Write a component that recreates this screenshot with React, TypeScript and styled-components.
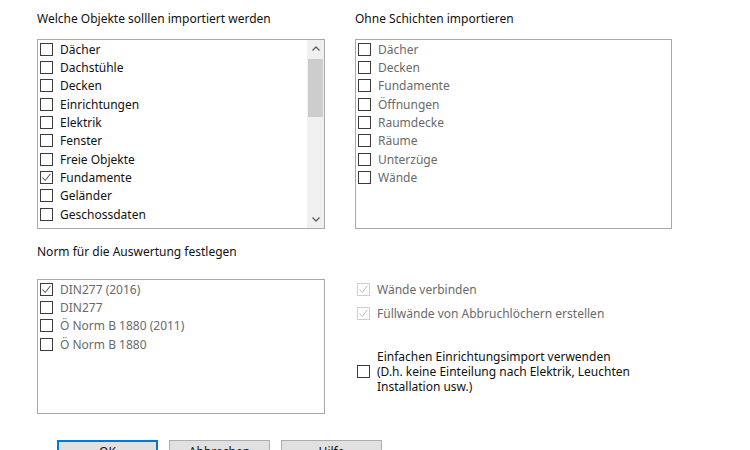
import React from 'react';
import styled, { createGlobalStyle } from 'styled-components';

const GlobalStyle = createGlobalStyle`
  html, body {
    margin: 0;
    padding: 0;
    background: #ffffff;
  }
`;

const Page = styled.div`
  width: 750px;
  height: 450px;
  overflow: hidden;
  box-sizing: border-box;
  padding: 11px 0 0 37px;
  font-family: 'Noto Sans', 'Open Sans', sans-serif;
  font-size: 12px;
  color: #111111;
`;

const Grid = styled.div`
  display: grid;
  grid-template-columns: 288px 317px;
  column-gap: 30px;
`;

const Section = styled.div<{ $top?: number }>`
  display: flex;
  flex-direction: column;
  margin-top: ${(p) => p.$top ?? 0}px;
`;

const GroupLabel = styled.div<{ $gap: number }>`
  line-height: 16px;
  height: 16px;
  margin-bottom: ${(p) => p.$gap}px;
  white-space: nowrap;
`;

const ListBox = styled.div<{ $height: number }>`
  display: flex;
  height: ${(p) => p.$height}px;
  box-sizing: border-box;
  border: 1px solid #a9a9a9;
  background: #ffffff;
`;

const Items = styled.div`
  flex: 1;
  display: flex;
  flex-direction: column;
  padding: 0 0 0 2px;
  overflow: hidden;
`;

const Item = styled.div<{ $muted?: boolean }>`
  display: flex;
  align-items: center;
  gap: 7px;
  height: 18.35px;
  flex: none;
  white-space: nowrap;
  color: ${(p) => (p.$muted ? '#6a6a6a' : '#111111')};
`;

const Box = styled.span<{ $faint?: boolean }>`
  display: inline-flex;
  align-items: center;
  justify-content: center;
  width: 13px;
  height: 13px;
  flex: none;
  box-sizing: border-box;
  border: 1px solid ${(p) => (p.$faint ? '#cfcfcf' : '#3c3c3c')};
  background: #ffffff;
  color: ${(p) => (p.$faint ? '#bdbdbd' : '#3c3c3c')};
`;

const Scrollbar = styled.div`
  width: 17px;
  flex: none;
  display: flex;
  flex-direction: column;
  background: #f0f0f0;
`;

const Arrow = styled.div`
  height: 17px;
  display: flex;
  align-items: center;
  justify-content: center;
  color: #606060;
`;

const Track = styled.div`
  flex: 1;
  padding-top: 2px;
`;

const Thumb = styled.div`
  height: 58px;
  margin: 0 1px;
  background: #cdcdcd;
`;

const Options = styled.div`
  display: flex;
  flex-direction: column;
  padding-top: 51px;
`;

const Option = styled.div<{ $faint?: boolean; $top?: number }>`
  display: flex;
  align-items: center;
  gap: 7px;
  margin-top: ${(p) => p.$top ?? 0}px;
  padding-left: 2px;
  line-height: 15px;
  min-height: 18px;
  color: ${(p) => (p.$faint ? '#6a6a6a' : '#111111')};
`;

const Buttons = styled.div`
  display: flex;
  gap: 11px;
  margin-top: 26px;
  padding-left: 20px;
`;

const Button = styled.button<{ $primary?: boolean }>`
  width: 101px;
  height: 23px;
  box-sizing: border-box;
  font-family: inherit;
  font-size: 12px;
  line-height: 16px;
  color: #111111;
  background: #e1e1e1;
  border: ${(p) => (p.$primary ? '2px solid #0078d7' : '1px solid #adadad')};
  padding: 0;
`;

const Check = () => (
  <svg width="11" height="11" viewBox="0 0 11 11">
    <polyline points="1.5,5.5 4.2,8.5 9.5,1.8" fill="none" stroke="currentColor" strokeWidth="1" />
  </svg>
);

const Chevron = ({ up }: { up?: boolean }) => (
  <svg width="8" height="5" viewBox="0 0 8 5">
    <polyline
      points={up ? '0.5,4.5 4,1 7.5,4.5' : '0.5,0.5 4,4 7.5,0.5'}
      fill="none"
      stroke="currentColor"
      strokeWidth="1.3"
    />
  </svg>
);

type Entry = { label: string; checked?: boolean };

const objects: Entry[] = [
  { label: 'Dächer' },
  { label: 'Dachstühle' },
  { label: 'Decken' },
  { label: 'Einrichtungen' },
  { label: 'Elektrik' },
  { label: 'Fenster' },
  { label: 'Freie Objekte' },
  { label: 'Fundamente', checked: true },
  { label: 'Geländer' },
  { label: 'Geschossdaten' },
];

const layers: Entry[] = [
  { label: 'Dächer' },
  { label: 'Decken' },
  { label: 'Fundamente' },
  { label: 'Öffnungen' },
  { label: 'Raumdecke' },
  { label: 'Räume' },
  { label: 'Unterzüge' },
  { label: 'Wände' },
];

const norms: Entry[] = [
  { label: 'DIN277 (2016)', checked: true },
  { label: 'DIN277' },
  { label: 'Ö Norm B 1880 (2011)' },
  { label: 'Ö Norm B 1880' },
];

const CheckList = ({ entries, muted }: { entries: Entry[]; muted?: boolean }) => (
  <Items>
    {entries.map((e) => (
      <Item key={e.label} $muted={muted}>
        <Box>{e.checked && <Check />}</Box>
        {e.label}
      </Item>
    ))}
  </Items>
);

export default function App() {
  return (
    <Page>
      <GlobalStyle />
      <Grid>
        <Section>
          <GroupLabel $gap={12}>Welche Objekte solllen importiert werden</GroupLabel>
          <ListBox $height={190}>
            <CheckList entries={objects} />
            <Scrollbar>
              <Arrow>
                <Chevron up />
              </Arrow>
              <Track>
                <Thumb />
              </Track>
              <Arrow>
                <Chevron />
              </Arrow>
            </Scrollbar>
          </ListBox>
        </Section>

        <Section>
          <GroupLabel $gap={12}>Ohne Schichten importieren</GroupLabel>
          <ListBox $height={190}>
            <CheckList entries={layers} muted />
          </ListBox>
        </Section>

        <Section $top={15}>
          <GroupLabel $gap={19}>Norm für die Auswertung festlegen</GroupLabel>
          <ListBox $height={135}>
            <CheckList entries={norms} muted />
          </ListBox>
        </Section>

        <Options>
          <Option $faint>
            <Box $faint>
              <Check />
            </Box>
            Wände verbinden
          </Option>
          <Option $faint $top={6}>
            <Box $faint>
              <Check />
            </Box>
            Füllwände von Abbruchlöchern erstellen
          </Option>
          <Option $top={27}>
            <Box />
            <span>
              Einfachen Einrichtungsimport verwenden
              <br />
              (D.h. keine Einteilung nach Elektrik, Leuchten
              <br />
              Installation usw.)
            </span>
          </Option>
        </Options>
      </Grid>

      <Buttons>
        <Button $primary>OK</Button>
        <Button>Abbrechen</Button>
        <Button>Hilfe</Button>
      </Buttons>
    </Page>
  );
}
